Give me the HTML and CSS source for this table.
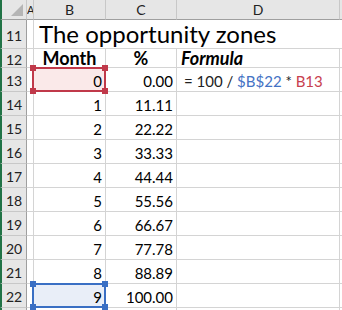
FILE: index.html
```html
<!DOCTYPE html>
<html>
<head>
<meta charset="utf-8">
<link rel="stylesheet" href="styles.css">
</head>
<body>
<div class="sheet">
  <div class="corner hdr"><span class="tri"></span></div>
  <div class="hdr colh a">A</div>
  <div class="hdr colh">B</div>
  <div class="hdr colh">C</div>
  <div class="hdr colh">D</div>
  <div class="hdr colh rest"></div>

  <div class="rowh">11</div>
  <div class="cell"></div>
  <div class="cell title">The opportunity zones</div>
  <div class="cell rest"></div>

  <div class="rowh">12</div>
  <div class="cell"></div>
  <div class="cell head">Month</div>
  <div class="cell head">%</div>
  <div class="cell formula-head">Formula</div>
  <div class="cell rest"></div>

  <div class="rowh">13</div>
  <div class="cell"></div>
  <div class="cell num sel red">0<span class="selbox"><i class="h tl"></i><i class="h tr"></i><i class="h bl"></i><i class="h br"></i></span></div>
  <div class="cell num">0.00</div>
  <div class="cell formula"><span>= 100 / <span class="blue">$B$22</span> * <span class="redt">B13</span></span></div>
  <div class="cell rest"></div>

  <div class="rowh">14</div><div class="cell"></div><div class="cell num">1</div><div class="cell num">11.11</div><div class="cell"></div><div class="cell rest"></div>
  <div class="rowh">15</div><div class="cell"></div><div class="cell num">2</div><div class="cell num">22.22</div><div class="cell"></div><div class="cell rest"></div>
  <div class="rowh">16</div><div class="cell"></div><div class="cell num">3</div><div class="cell num">33.33</div><div class="cell"></div><div class="cell rest"></div>
  <div class="rowh">17</div><div class="cell"></div><div class="cell num">4</div><div class="cell num">44.44</div><div class="cell"></div><div class="cell rest"></div>
  <div class="rowh">18</div><div class="cell"></div><div class="cell num">5</div><div class="cell num">55.56</div><div class="cell"></div><div class="cell rest"></div>
  <div class="rowh">19</div><div class="cell"></div><div class="cell num">6</div><div class="cell num">66.67</div><div class="cell"></div><div class="cell rest"></div>
  <div class="rowh">20</div><div class="cell"></div><div class="cell num">7</div><div class="cell num">77.78</div><div class="cell"></div><div class="cell rest"></div>
  <div class="rowh">21</div><div class="cell"></div><div class="cell num">8</div><div class="cell num">88.89</div><div class="cell"></div><div class="cell rest"></div>

  <div class="rowh">22</div>
  <div class="cell"></div>
  <div class="cell num sel blu">9<span class="selbox"><i class="h tl"></i><i class="h tr"></i><i class="h bl"></i><i class="h br"></i></span></div>
  <div class="cell num">100.00</div>
  <div class="cell"></div>
  <div class="cell rest"></div>

  <div class="rowh stub"></div><div class="cell stub"></div><div class="cell stub"></div><div class="cell stub"></div><div class="cell stub"></div><div class="cell rest stub"></div>
</div>
</body>
</html>
```
FILE: styles.css
```css
* { box-sizing: border-box; }
html, body { margin: 0; padding: 0; background: #fff; overflow: hidden; }
body { width: 342px; height: 310px; }

.sheet {
  display: grid;
  grid-template-columns: 27px 7px 72px 71px 163px 2px;
  grid-template-rows: 20px 29px 19px repeat(10, 24px) 3px;
  font-family: "Lato", "Liberation Sans", sans-serif;
  color: #000;
}

.hdr {
  background: #e6e6e6;
  border-right: 1px solid #c8c8c8;
  border-bottom: 1px solid #9f9f9f;
  font-size: 14px;
  color: #222;
  display: flex;
  align-items: center;
  justify-content: center;
  overflow: hidden;
}
.corner { position: relative; border-left: 2px solid #217346; border-right: 1px solid #c8c8c8; }
.tri {
  position: absolute;
  right: 3px;
  bottom: 3px;
  width: 0; height: 0;
  border-left: 12px solid transparent;
  border-bottom: 12px solid #b5b5b5;
}
.colh.a { justify-content: flex-start; padding-left: 0; font-size: 11px; }
.colh.rest { border-right: none; }

.rowh {
  background: #e6e6e6;
  border-left: 2px solid #217346;
  border-right: 1px solid #9f9f9f;
  border-bottom: 1px solid #c8c8c8;
  font-size: 14px;
  color: #222;
  display: flex;
  align-items: center;
  justify-content: center;
  padding-top: 2px;
}

.cell {
  border-right: 1px solid #d4d4d4;
  border-bottom: 1px solid #d4d4d4;
  font-size: 15px;
  display: flex;
  align-items: flex-end;
  padding: 0 3px 1px 3px;
  white-space: nowrap;
}
.cell.rest { border-right: none; }
.stub { border-bottom: none; }

.title {
  grid-column: span 3;
  font-size: 24px;
  padding-left: 5px;
  padding-bottom: 0;
  line-height: 28px;
  border-right: none;
}

.head { font-weight: bold; justify-content: center; font-size: 18px; line-height: 18px; padding-bottom: 0; }
.formula-head { font-weight: bold; font-style: italic; padding-left: 4px; font-size: 18px; line-height: 18px; padding-bottom: 0; }
.num { justify-content: flex-end; }
.formula { padding-left: 7px; color: #222; }
.blue { color: #4472c4; }
.redt { color: #c8404e; }

.sel { position: relative; }
.red { background: #fae9e9; }
.blu { background: #e9eef8; }
.selbox {
  position: absolute;
  left: -2px; top: -1px; right: -1px; bottom: -1px;
  border: 2px solid #c0394a;
}
.blu .selbox { border-color: #3a6fc4; }
.h {
  position: absolute;
  width: 6px; height: 6px;
  background: #c0394a;
}
.blu .h { background: #3a6fc4; }
.tl { left: -4px; top: -4px; }
.tr { right: -4px; top: -4px; }
.bl { left: -4px; bottom: -4px; }
.br { right: -4px; bottom: -4px; }
```
